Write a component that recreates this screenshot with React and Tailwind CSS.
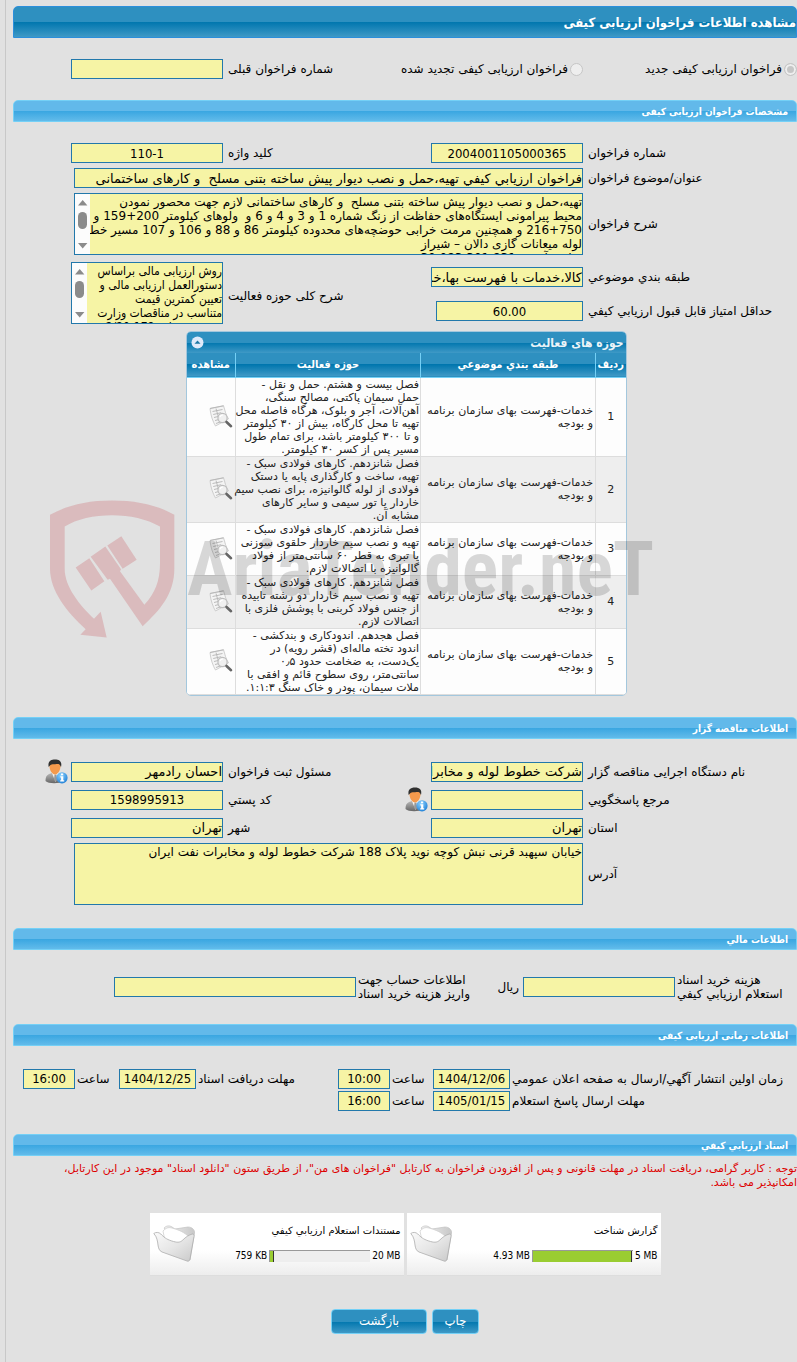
import { useState } from 'react';

const FORM_GRID = 'grid grid-cols-[214fr_152fr_208fr_152fr_58fr] items-center';
const TIME_GRID = 'grid grid-cols-[287fr_77fr_43fr_52fr_142fr_77fr_44fr_52fr_10fr] items-center';
const CONDENSED = "font-['DejaVu_Sans_Condensed','DejaVu_Sans',sans-serif]";
const FIELD = 'block w-full min-w-0 h-5 bg-[#f6f4a5] border border-[#2278ab] p-0 text-[13px] leading-4 text-black outline-none';
const LABEL = 'block min-w-0 whitespace-nowrap text-left text-xs leading-[14px] text-black pl-[5px]';
const LABEL_TIGHT = 'block min-w-0 whitespace-nowrap text-left text-xs leading-[14px] text-black pl-[2px]';
const BLUE = 'bg-[linear-gradient(to_bottom,#2e90c0_0%,#2e90c0_50%,#0076ae_50%,#3f99c6_100%)]';

const description = `تهیه،حمل و نصب دیوار پیش ساخته بتنی مسلح  و کارهای ساختمانی لازم جهت محصور نمودن
محیط پیرامونی ایستگاه‌های حفاظت از زنگ شماره 1 و 3 و 4 و 6 و  ولوهای کیلومتر 200+159 و
216+750 و همچنین مرمت خرابی حوضچه‌های محدوده کیلومتر 86 و 88 و 106 و 107 مسیر خط
لوله میعانات گازی دالان – شیراز
مبلغ برآورد : 30,083,301,831`;

const activityNote = `روش ارزیابی مالی براساس
دستورالعمل ارزیابی مالی و
تعیین کمترین قیمت
متناسب در مناقصات وزارت
نفت به شماره 178-2/20`;

const rows = [
  `فصل بیست و هشتم. حمل و نقل -
حمل سیمان پاکتی، مصالح سنگی،
آهن‌آلات، آجر و بلوک، هرگاه فاصله محل
تهیه تا محل کارگاه، بیش از ۳۰ کیلومتر
و تا ۳۰۰ کیلومتر باشد، برای تمام طول
مسیر پس از کسر ۳۰ کیلومتر.`,
  `فصل شانزدهم. کارهای فولادی سبک -
تهیه، ساخت و کارگذاری پایه یا دستک
فولادی از لوله گالوانیزه، برای نصب سیم
خاردار یا تور سیمی و سایر کارهای
مشابه آن.`,
  `فصل شانزدهم. کارهای فولادی سبک -
تهیه و نصب سیم خاردار حلقوی سوزنی
یا تبری به قطر ۶۰ سانتی‌متر از فولاد
گالوانیزه با اتصالات لازم.`,
  `فصل شانزدهم. کارهای فولادی سبک -
تهیه و نصب سیم خاردار دو رشته تابیده
از جنس فولاد کربنی با پوشش فلزی با
اتصالات لازم.`,
  `فصل هجدهم. اندودکاری و بندکشی -
اندود تخته ماله‌ای (قشر رویه) در
یک‌دست، به ضخامت حدود ۰٫۵
سانتی‌متر، روی سطوح قائم و افقی با
ملات سیمان، پودر و خاک سنگ ۱:۱:۳.`,
];

const files = [
  { title: 'گزارش شناخت', used: '4.93 MB', total: '5 MB', percent: 99 },
  { title: 'مستندات استعلام ارزیابي کیفي', used: '759 KB', total: '20 MB', percent: 4 },
];

const Section = ({ title }) => (
  <h2 className={`h-[22px] rounded-t-[5px] border border-[#74d0f6] bg-[linear-gradient(to_bottom,#62b9ea_0%,#62b9ea_50%,#39a6e1_50%,#62bbea_100%)] px-2 text-[10px] leading-[21px] font-bold text-white ${CONDENSED}`}>
    {title}
  </h2>
);

const Field = ({ id, label, value = '', center, tight }) => (
  <>
    <label htmlFor={id} className={tight ? LABEL_TIGHT : LABEL}>{label}</label>
    <input id={id} type="text" readOnly value={value} className={`${FIELD} ${center ? `text-center ${CONDENSED}` : 'text-right'}`} />
  </>
);

const ScrollArea = ({ id, value, className }) => (
  <div className={`flex h-[62px] border border-[#2278ab] bg-[#f6f4a5] ${className}`}>
    <textarea
      id={id}
      readOnly
      value={value}
      className="block min-w-0 flex-1 resize-none overflow-hidden whitespace-pre p-0 pt-px text-xs leading-[14px] text-black outline-none"
    />
    <svg className="h-full w-[15px] shrink-0" viewBox="0 0 15 60">
      <rect width="15" height="60" fill="#fcfcfc" />
      <path d="M3 11.500 7.700 6l4.700 5.500zM3 49 7.700 54.500l4.700-5.500z" fill="#8b8b8b" />
      <rect x="3" y="18" width="9" height="17" rx="4.500" fill="#8b8b8b" />
    </svg>
  </div>
);

const UserIcon = () => (
  <svg width="23" height="25" viewBox="0 0 23 25">
    <defs>
      <linearGradient id="suit" x1="0" y1="0" x2="0" y2="1">
        <stop offset="0" stopColor="#b8b8b8" />
        <stop offset="1" stopColor="#666" />
      </linearGradient>
      <radialGradient id="info" cx="0.4" cy="0.3" r="0.8">
        <stop offset="0" stopColor="#8fd3ff" />
        <stop offset="1" stopColor="#1679d3" />
      </radialGradient>
    </defs>
    <path d="M.5 22c0-5 2-7 6.500-8h6c4 1 5.500 3 5.500 8-4 3-15 3-18 0z" fill="url(#suit)" />
    <path d="M7 14l3.500 9L14 14z" fill="#f4f4f4" />
    <path d="M9.500 15.500h2l.7 5-1.600 2-1.600-2z" fill="#999" />
    <path d="M4.500 7c0-5 11-5 11 0 0 4-2.500 8.500-5.500 8.500S4.500 11 4.500 7z" fill="#f59a4c" />
    <path d="M3.700 8C2.500 2.500 5.500.4 10 .4S17.300 2.500 16 8c-1-2.500-2-3-3.500-3-3 .4-6.800-.5-8.800 3z" fill="#30302f" />
    <circle cx="17" cy="18.800" r="5.600" fill="url(#info)" />
    <path d="M16 14.500h2.200v1.800H16zM15.300 17.300h3v4h.9v1.200h-4v-1.200h.9v-2.800h-.8z" fill="#fff" />
  </svg>
);

const ViewIcon = () => (
  <svg width="24" height="24" viewBox="0 0 24 24">
    <path d="M1 3.500 14.500.8c1.500 4 2 9 5 13L6.500 21C4 17 1.500 10 1 3.500z" fill="#f4f4f4" stroke="#c4c4c4" strokeWidth="0.8" />
    <path d="M1 3.500 14.500.8M3.500 6.500l10-2M4.200 9.500l8-1.800M5 12.500l5-1.200M6 15.500l4-1M7 18.500l4-1.500M7 3.500l4 14" fill="none" stroke="#b4b4b4" strokeWidth="0.9" />
    <circle cx="13.500" cy="13" r="4.600" fill="#efefef" fillOpacity="0.9" stroke="#bdbdbd" strokeWidth="1.200" />
    <path d="M11 12a3 3 0 0 1 3-2" fill="none" stroke="#fff" strokeWidth="1.200" />
    <path d="M17.500 17l4.500 4.200" stroke="#666" strokeWidth="2.600" strokeLinecap="round" />
  </svg>
);

const FolderIcon = () => (
  <svg width="43" height="39" viewBox="0 0 43 39">
    <defs>
      <linearGradient id="flap" x1="0" y1="0" x2="1" y2="1">
        <stop offset="0" stopColor="#fafafa" />
        <stop offset="0.5" stopColor="#e6e6e6" />
        <stop offset="1" stopColor="#c9c9c9" />
      </linearGradient>
      <linearGradient id="back" x1="0" y1="0" x2="1" y2="0">
        <stop offset="0" stopColor="#f2f2f2" />
        <stop offset="1" stopColor="#c8c8c8" />
      </linearGradient>
    </defs>
    <path d="M11 4c2-2 5-3 8-1l3 2 13-2c4 0 7 3 6.500 6L37 36z" fill="url(#back)" stroke="#c2c2c2" strokeWidth="0.7" />
    <path d="M10 7c3-3 5-4 9-3 7 2 12 4 17 9l-2 12-22-8z" fill="#fff" stroke="#ccc" strokeWidth="0.7" />
    <path d="M.8 9.500c2-1.500 5-1.500 7 .5 3 3 5 5 11 7 5 1.500 8 2 11-1s6-5 9.500-6c1.500 0 2 1 1.700 2.500L37 35c-.4 2-1.500 2.600-3 2L9 28c-3-1.300-3.500-4-4-7C4.500 17 4 13 .8 9.500z" fill="url(#flap)" stroke="#adadad" strokeWidth="0.8" />
  </svg>
);

const Watermark = () => (
  <div dir="ltr" className="pointer-events-none absolute top-[169px] left-[37px] flex items-start gap-3">
    <svg width="125" height="138" viewBox="60 59 375 413" className="shrink-0">
      <g fill="#c33b45" fillOpacity="0.230">
        <path d="M60 103C110 75 170 60 246 60S385 75 433 103V265C433 340 390 390 338 437L240 295 233 298 182 229 226 198 273 266 270 272 343 373C375 340 390 300 390 250V138C350 115 300 104 246 104S140 115 104 138V265C104 320 150 375 192 415L212 394 230 471 151 463 167 446C110 395 60 330 60 265z" />
        <path d="M137 261 178 233 223 302 184 330zM232 195 274 167 320 238 278 265z" />
      </g>
    </svg>
    <span className="pt-6 font-['Roboto_Condensed','Liberation_Sans_Narrow',sans-serif] text-[76px] leading-[90px] font-bold whitespace-nowrap text-black/15">
      AriaTender.neT
    </span>
  </div>
);

const App = () => {
  const [open, setOpen] = useState(true);

  return (
    <div dir="rtl" lang="fa" className="min-h-screen overflow-x-hidden bg-[#e1e1e1] pl-[5px] font-['DejaVu_Sans',sans-serif]">
      <main className="min-h-screen border-l border-[#c8c8c8] pt-[6px] pb-3 pl-[7px]">
        <h1 className={`h-8 rounded-t-[5px] border border-[#2b8fdc] text-[13px] leading-[32px] font-bold text-white ${CONDENSED} ${BLUE}`}>
          مشاهده اطلاعات فراخوان ارزیابی کیفی
        </h1>

        <div className={`my-[21px] text-xs ${FORM_GRID}`}>
          <label className="flex min-w-0 items-center gap-[2px] whitespace-nowrap">
            <input type="radio" name="kind" disabled defaultChecked className="size-[13px] shrink-0 appearance-none rounded-full border border-[#c6c6c6] bg-[#c6c6c6] shadow-[inset_0_0_0_2px_#eee]" />
            فراخوان ارزیابی کیفی جدید
          </label>
          <label className="flex min-w-0 items-center gap-[2px] whitespace-nowrap">
            <input type="radio" name="kind" disabled className="size-[13px] shrink-0 appearance-none rounded-full border border-[#c6c6c6] bg-[#eee]" />
            فراخوان ارزیابی کیفی تجدید شده
          </label>
          <Field id="previous" label="شماره فراخوان قبلی" />
        </div>

        <Section title="مشخصات فراخوان ارزیابی کیفی" />
        <div className="flex flex-col gap-[5px] pt-[21px]">
          <div className={FORM_GRID}>
            <Field id="number" label="شماره فراخوان" value="2004001105000365" center />
            <Field id="keyword" label="کلید واژه" value="110-1" center />
          </div>
          <div className={FORM_GRID}>
            <label htmlFor="subject" className={LABEL}>عنوان/موضوع فراخوان</label>
            <div className="col-span-3 pl-[3px]">
              <input id="subject" readOnly className={FIELD} value="فراخوان ارزیابي کیفي تهیه،حمل و نصب دیوار پیش ساخته بتنی مسلح  و کارهای ساختمانی" />
            </div>
          </div>
          <div className={FORM_GRID}>
            <label htmlFor="description" className={LABEL}>شرح فراخوان</label>
            <ScrollArea id="description" value={description} className="col-span-3 ml-[3px]" />
          </div>
        </div>
        <div className={`mt-[7px] grid-rows-[30px_38px] ${FORM_GRID}`}>
          <Field id="category" label="طبقه بندي موضوعي" value="کالا،خدمات با فهرست بها،خدمات" />
          <label htmlFor="activity" className={`row-span-2 ${LABEL}`}>شرح کلی حوزه فعالیت</label>
          <ScrollArea id="activity" value={activityNote} className={`row-span-2 self-start ${CONDENSED}`} />
          <label htmlFor="score" className={`col-start-1 row-start-2 ${LABEL}`}>حداقل امتیاز قابل قبول ارزیابي کیفي</label>
          <div className="col-start-2 row-start-2 pl-[5px]">
            <input id="score" readOnly value="60.00" className={`text-center ${FIELD} ${CONDENSED}`} />
          </div>
        </div>

        <div className="relative mt-px mb-[21px] flex justify-center pl-[2px]">
          <div className="w-[441px] overflow-hidden rounded-[5px] border border-[#a3c7dd] bg-white">
            <div className={`flex h-[21px] items-center justify-between pr-[2px] pl-1 text-xs font-bold text-[#eaf3f8] ${CONDENSED} ${BLUE}`}>
              حوزه های فعالیت
              <button type="button" aria-label="جمع کردن" onClick={() => setOpen(!open)}>
                <svg width="13" height="13" viewBox="0 0 13 13">
                  <circle cx="6.500" cy="6.500" r="6" fill="#dfeafa" />
                  <path d="M3.500 7.800 6.500 4.600l3 3.200z" fill="#1d77a5" />
                </svg>
              </button>
            </div>
            {open && (
              <table className="w-full table-fixed border-collapse text-[11px] leading-[13px] text-[#222]">
                <colgroup>
                  <col className="w-[30px]" />
                  <col className="w-[175px]" />
                  <col className="w-[185px]" />
                  <col />
                </colgroup>
                <thead className={CONDENSED}>
                  <tr className={`h-6 border-b border-[#74d0f6] text-white ${BLUE}`}>
                    <th className="p-0">ردیف</th>
                    <th className="border-r border-[#74d0f6] p-0">طبقه بندي موضوعي</th>
                    <th className="border-r border-[#74d0f6] p-0">حوزه فعالیت</th>
                    <th className="border-r border-[#74d0f6] p-0">مشاهده</th>
                  </tr>
                </thead>
                <tbody>
                  {rows.map((text, idx) => (
                    <tr key={idx} className="border-b border-[#ddd] odd:bg-[#fdfdfd] even:bg-[#eee]">
                      <td className="p-0 text-center">{idx + 1}</td>
                      <td className="border-r border-[#ddd] p-0 pr-[2px] whitespace-pre">{'خدمات-فهرست بهای سازمان برنامه\nو بودجه'}</td>
                      <td className="border-r border-[#ddd] p-0 pr-px whitespace-pre">{text}</td>
                      <td className="border-r border-[#ddd] p-0 pr-[2px]">
                        <button type="button" aria-label="مشاهده" className="block"><ViewIcon /></button>
                      </td>
                    </tr>
                  ))}
                </tbody>
              </table>
            )}
          </div>
          <Watermark />
        </div>

        <Section title="اطلاعات مناقصه گزار" />
        <div className="flex flex-col pt-[19px]">
          <div className={`h-7 ${FORM_GRID}`}>
            <Field id="agency" label="نام دستگاه اجرایی مناقصه گزار" value="شرکت خطوط لوله و مخابرات نفت ایران" />
            <Field id="registrar" label="مسئول ثبت فراخوان" value="احسان رادمهر" />
            <button type="button" aria-label="مشخصات مسئول" className="mr-[3px] w-[23px]"><UserIcon /></button>
          </div>
          <div className={`h-7 ${FORM_GRID}`}>
            <label htmlFor="contact" className={LABEL}>مرجع پاسخگویي</label>
            <input id="contact" readOnly value="" className={FIELD} />
            <div className="flex items-center justify-between">
              <button type="button" aria-label="مشخصات مرجع" className="mr-[3px]"><UserIcon /></button>
              <label htmlFor="postal" className={LABEL}>کد پستي</label>
            </div>
            <input id="postal" readOnly value="1598995913" className={`text-center ${FIELD} ${CONDENSED}`} />
          </div>
          <div className={`h-7 ${FORM_GRID}`}>
            <Field id="province" label="استان" value="تهران" />
            <Field id="city" label="شهر" value="تهران" />
          </div>
          <div className={`pt-px ${FORM_GRID}`}>
            <label htmlFor="address" className={LABEL}>آدرس</label>
            <div className="col-span-3 pl-[3px]">
              <textarea
                id="address"
                readOnly
                value="خیابان سپهبد قرنی نبش کوچه نوید پلاک 188 شرکت خطوط لوله و مخابرات نفت ایران"
                className="block h-[62px] w-full resize-none border border-[#2278ab] bg-[#f6f4a5] p-0 pt-px text-xs leading-[14px] text-black outline-none"
              />
            </div>
          </div>
        </div>

        <div className="mt-[23px]">
          <Section title="اطلاعات مالي" />
        </div>
        <div className="my-[23px] grid h-7 grid-cols-[122fr_152fr_53fr_114fr_242fr_101fr] items-center text-xs">
          <label htmlFor="cost" className={LABEL_TIGHT}>هزینه خرید اسناد<br />استعلام ارزیابي کیفي</label>
          <input id="cost" readOnly value="" className={FIELD} />
          <span className="pr-1">ریال</span>
          <label htmlFor="account" className={LABEL_TIGHT}>اطلاعات حساب جهت<br />واریز هزینه خرید اسناد</label>
          <input id="account" readOnly value="" className={FIELD} />
        </div>

        <Section title="اطلاعات زمانی ارزیابی کیفی" />
        <div className="flex flex-col gap-[2px] py-[23px]">
          <div className={TIME_GRID}>
            <Field tight center id="publish-date" label="زمان اولین انتشار آگهي/ارسال به صفحه اعلان عمومي" value="1404/12/06" />
            <Field tight center id="publish-time" label="ساعت" value="10:00" />
            <Field tight center id="receive-date" label="مهلت دریافت اسناد" value="1404/12/25" />
            <Field tight center id="receive-time" label="ساعت" value="16:00" />
          </div>
          <div className={TIME_GRID}>
            <Field tight center id="reply-date" label="مهلت ارسال پاسخ استعلام" value="1405/01/15" />
            <Field tight center id="reply-time" label="ساعت" value="16:00" />
          </div>
        </div>

        <Section title="اسناد ارزیابي کیفي" />
        <p className="mt-[6px] text-[11px] leading-[14px] text-[#dd0000]">
          توجه : کاربر گرامی، دریافت اسناد در مهلت قانونی و پس از افزودن فراخوان به کارتابل "فراخوان های من"، از طریق ستون "دانلود اسناد" موجود در این کارتابل،
          <br />
          امکانپذیر می باشد.
        </p>

        <div className="mt-[23px] flex justify-center gap-[3px]">
          {files.map((file) => (
            <section key={file.title} className="flex h-[63px] w-[254px] items-center justify-between border-b border-[#ddd] bg-linear-to-b from-white from-60% to-[#ededed] px-[3px] text-[10px] leading-3 text-black">
              <div>
                <h3 className="mb-[13px]">{file.title}</h3>
                <div dir="ltr" className={`flex items-center justify-end gap-[2px] ${CONDENSED}`}>
                  <span>{file.used}</span>
                  <div className="h-3 w-[101px] border-t border-l border-[#999] bg-[#eee]">
                    <div className="h-full border-r border-[#333] bg-[#9acd32]" style={{ width: `${file.percent}%` }} />
                  </div>
                  <span>{file.total}</span>
                </div>
              </div>
              <FolderIcon />
            </section>
          ))}
        </div>

        <div className={`mt-[33px] flex justify-center gap-[5px] text-[13px] text-white ${CONDENSED}`}>
          <button type="button" className={`h-[25px] w-[47px] rounded-[4px] border border-[#74d0f6] ${BLUE}`}>چاپ</button>
          <button type="button" className={`h-[25px] w-24 rounded-[4px] border border-[#74d0f6] ${BLUE}`}>بازگشت</button>
        </div>
      </main>
    </div>
  );
};

export default App;
